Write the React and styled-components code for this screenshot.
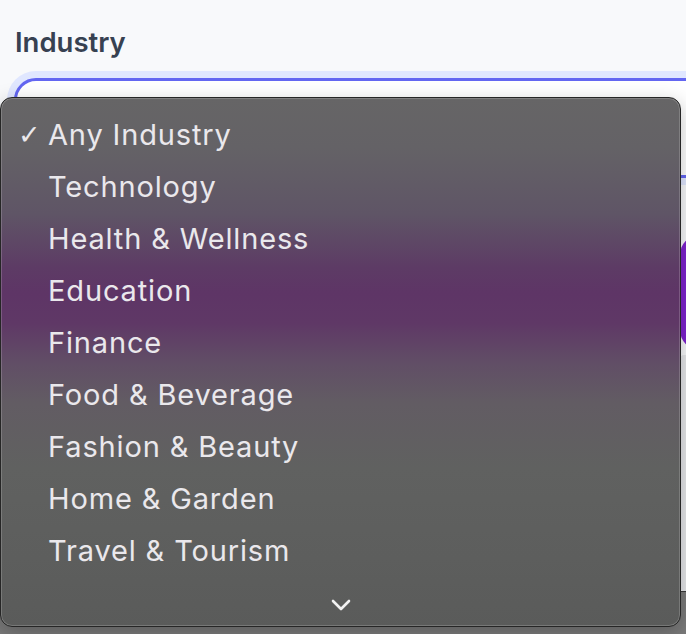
import React from "react";
import styled, { createGlobalStyle } from "styled-components";

const GlobalStyle = createGlobalStyle`
  html, body {
    margin: 0;
    padding: 0;
    background: #f8f9fb;
    overflow: hidden;
  }
  * { box-sizing: border-box; }
`;

const industries = [
  "Any Industry",
  "Technology",
  "Health & Wellness",
  "Education",
  "Finance",
  "Food & Beverage",
  "Fashion & Beauty",
  "Home & Garden",
  "Travel & Tourism",
];

const Page = styled.div`
  position: relative;
  width: 686px;
  height: 634px;
  overflow: hidden;
  display: flex;
  flex-direction: column;
  font-family: Inter, "Noto Sans", sans-serif;
`;

const Content = styled.div`
  flex: 1;
  padding: 26px 0 0 14px;
  display: flex;
  flex-direction: column;
`;

const Label = styled.label`
  font-size: 27.5px;
  line-height: 32px;
  font-weight: 600;
  color: #374151;
  margin-left: 1px;
`;

const Select = styled.div`
  margin-top: 20px;
  width: 720px;
  height: 100px;
  border: 3px solid #6366f1;
  border-radius: 22px;
  background: #fff;
  box-shadow: 0 0 0 7px #e0e7ff;
  display: flex;
  align-items: flex-start;
  justify-content: flex-end;
  padding: 26px 18px 0 0;
  color: #374151;
`;

const Grid = styled.div`
  display: grid;
  grid-template-columns: 666px 200px;
  grid-template-rows: 115px 236px;
  row-gap: 5px;
  margin-top: 57px;
`;

const Button = styled.button`
  grid-column: 2;
  border: none;
  border-radius: 20px;
  background: #7e22ce;
`;

const Panel = styled.div`
  grid-column: 2;
  background: #e6e7ea;
  border-radius: 4px;
`;

const BottomBar = styled.div`
  height: 43px;
  background: #7b7b7b;
  border-top: 1px solid #3a3a3a;
`;

const Menu = styled.ul`
  position: absolute;
  left: 0;
  top: 97px;
  width: 681px;
  height: 530px;
  margin: 0;
  padding: 10px 0 0;
  list-style: none;
  border-radius: 12px;
  border: 1px solid #262626;
  box-shadow: inset 0 0 0 1px rgba(255, 255, 255, 0.18),
    0 6px 20px rgba(0, 0, 0, 0.25);
  background: linear-gradient(
    to bottom,
    #666566 0px,
    #646266 50px,
    #5f5566 115px,
    #5d3b65 170px,
    #5e3566 195px,
    #5f3866 225px,
    #614e66 265px,
    #625c63 305px,
    #606160 370px,
    #5d5e5d 460px,
    #5a5b5a 530px
  );
`;

const Item = styled.li`
  height: 52px;
  display: flex;
  align-items: center;
  padding-left: 47px;
  position: relative;
  font-size: 29px;
  color: #eae8ec;
  letter-spacing: 0.85px;
`;

const Check = styled.span`
  position: absolute;
  left: 17px;
  font-size: 27px;
  font-family: "DejaVu Sans", sans-serif;
  color: #eae8ec;
`;

const ScrollArrow = styled.div`
  display: flex;
  justify-content: center;
  margin-top: 23px;
  margin-left: 1px;
`;

export default function App() {
  return (
    <>
      <GlobalStyle />
      <Page>
        <Content>
          <Label>Industry</Label>
          <Select>
            <svg width="14" height="10" viewBox="0 0 14 10">
              <path d="M2 2l5 5 5-5" fill="none" stroke="#374151" strokeWidth="2" />
            </svg>
          </Select>
          <Grid>
            <Button />
            <Panel />
          </Grid>
        </Content>
        <BottomBar />
        <Menu>
          {industries.map((name, i) => (
            <Item key={name}>
              {i === 0 && <Check>✓</Check>}
              {name}
            </Item>
          ))}
          <ScrollArrow>
            <svg width="20" height="12" viewBox="0 0 20 12">
              <path
                d="M2 2l8 8 8-8"
                fill="none"
                stroke="#f2f2f2"
                strokeWidth="2.6"
                strokeLinecap="round"
                strokeLinejoin="round"
              />
            </svg>
          </ScrollArrow>
        </Menu>
      </Page>
    </>
  );
}
